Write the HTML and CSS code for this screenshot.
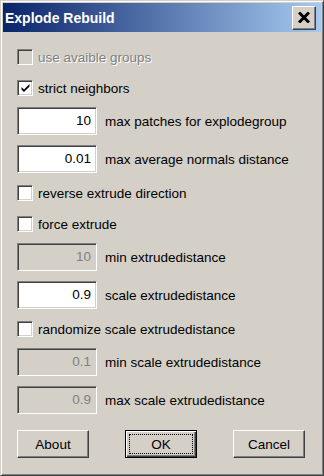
FILE: index.html
```html
<!DOCTYPE html>
<html lang="en">
<head>
	<meta charset="UTF-8">
	<title>Explode Rebuild</title>
	<link rel="stylesheet" href="styles.css">
</head>
<body>
<div class="window">
	<div class="caption">
		<h1>Explode Rebuild</h1>
		<span class="close">
			<svg width="12" height="11" viewBox="0 0 12 11">
				<path d="M1 0.5 L11 10.5 M11 0.5 L1 10.5" stroke="#000" stroke-width="3" fill="none"/>
			</svg>
		</span>
	</div>
	<div class="content">
		<div class="row cb disabled">
			<span class="box"></span>
			<span class="label">use avaible groups</span>
		</div>
		<div class="row cb">
			<span class="box">
				<svg width="9" height="8" viewBox="0 0 9 8">
					<path d="M0.5 3 L3 5.5 L8.5 0 L8.5 2.5 L3 8 L0.5 5.5 Z" fill="#000"/>
				</svg>
			</span>
			<span class="label">strict neighbors</span>
		</div>
		<div class="row tb">
			<span class="edit">10</span>
			<span class="label">max patches for explodegroup</span>
		</div>
		<div class="row tb">
			<span class="edit">0.01</span>
			<span class="label">max average normals distance</span>
		</div>
		<div class="row cb">
			<span class="box"></span>
			<span class="label">reverse extrude direction</span>
		</div>
		<div class="row cb">
			<span class="box"></span>
			<span class="label">force extrude</span>
		</div>
		<div class="row tb">
			<span class="edit off">10</span>
			<span class="label">min extrudedistance</span>
		</div>
		<div class="row tb">
			<span class="edit">0.9</span>
			<span class="label">scale extrudedistance</span>
		</div>
		<div class="row cb">
			<span class="box"></span>
			<span class="label">randomize scale extrudedistance</span>
		</div>
		<div class="row tb">
			<span class="edit off">0.1</span>
			<span class="label">min scale extrudedistance</span>
		</div>
		<div class="row tb">
			<span class="edit off">0.9</span>
			<span class="label">max scale extrudedistance</span>
		</div>
		<div class="buttons">
			<span class="btn">About</span>
			<span class="btn default"><span class="focus">OK</span></span>
			<span class="btn">Cancel</span>
		</div>
	</div>
</div>
</body>
</html>
```

FILE: styles.css
```css
*{
	margin: 0;
	padding: 0;
	box-sizing: border-box;
}
body{
	background: #d4d0c8;
	font-family: "Liberation Sans", Arial, sans-serif;
	font-size: 13.5px;
	color: #000;
}
.window{
	width: 324px;
	height: 476px;
	padding: 2px;
	background: #d4d0c8;
	border: 1px solid;
	border-color: #d4d0c8 #404040 #404040 #d4d0c8;
	box-shadow: inset 1px 1px #fff, inset -1px -1px #808080;
}
.caption{
	height: 29px;
	display: flex;
	align-items: center;
	justify-content: space-between;
	padding: 0 5px 0 2px;
	background: linear-gradient(to right, #0a246a, #a6caf0);
}
.caption h1{
	font-size: 14px;
	font-weight: bold;
	color: #fff;
}
.close{
	width: 24px;
	height: 24px;
	display: flex;
	align-items: center;
	justify-content: center;
	background: #d4d0c8;
	border: 1px solid;
	border-color: #fff #404040 #404040 #fff;
	box-shadow: inset -1px -1px #808080;
}
.content{
	padding: 17px 16px 0 14px;
	display: flex;
	flex-direction: column;
}
.row{
	display: flex;
	align-items: center;
	margin-top: 11px;
}
.row:first-child{
	margin-top: 0;
}
.cb + .cb{
	margin-top: 15px;
}
.tb + .tb{
	margin-top: 10px;
}
.tb + .cb{
	margin-top: 12px;
}
.cb{
	height: 16px;
}
.tb{
	height: 28px;
}
.box{
	width: 16px;
	height: 16px;
	background: #fff;
	border: 1px solid;
	border-color: #808080 #fff #fff #808080;
	box-shadow: inset 1px 1px #404040, inset -1px -1px #d4d0c8;
	display: flex;
	align-items: center;
	justify-content: center;
	margin-right: 5px;
}
.disabled .box{
	background: #d4d0c8;
}
.disabled .label{
	color: #808080;
	text-shadow: 1px 1px #fff;
}
.edit{
	width: 80px;
	height: 28px;
	background: #fff;
	border: 1px solid;
	border-color: #808080 #fff #fff #808080;
	box-shadow: inset 1px 1px #404040, inset -1px -1px #d4d0c8;
	text-align: right;
	padding: 5px 5px 0 0;
	line-height: 15px;
	margin-right: 8px;
}
.edit.off{
	background: #d4d0c8;
	color: #808080;
}
.buttons{
	display: flex;
	justify-content: space-between;
	margin-top: 16px;
}
.btn{
	width: 72px;
	height: 28px;
	display: flex;
	align-items: center;
	justify-content: center;
	border: 1px solid;
	border-color: #fff #404040 #404040 #fff;
	box-shadow: inset -1px -1px #808080;
}
.btn.default{
	border: 1px solid #000;
	box-shadow: inset 1px 1px #fff, inset -1px -1px #404040, inset -2px -2px #808080;
	padding: 3px;
}
.focus{
	width: 100%;
	height: 100%;
	display: flex;
	align-items: center;
	justify-content: center;
	border: 1px dotted #000;
}
```
